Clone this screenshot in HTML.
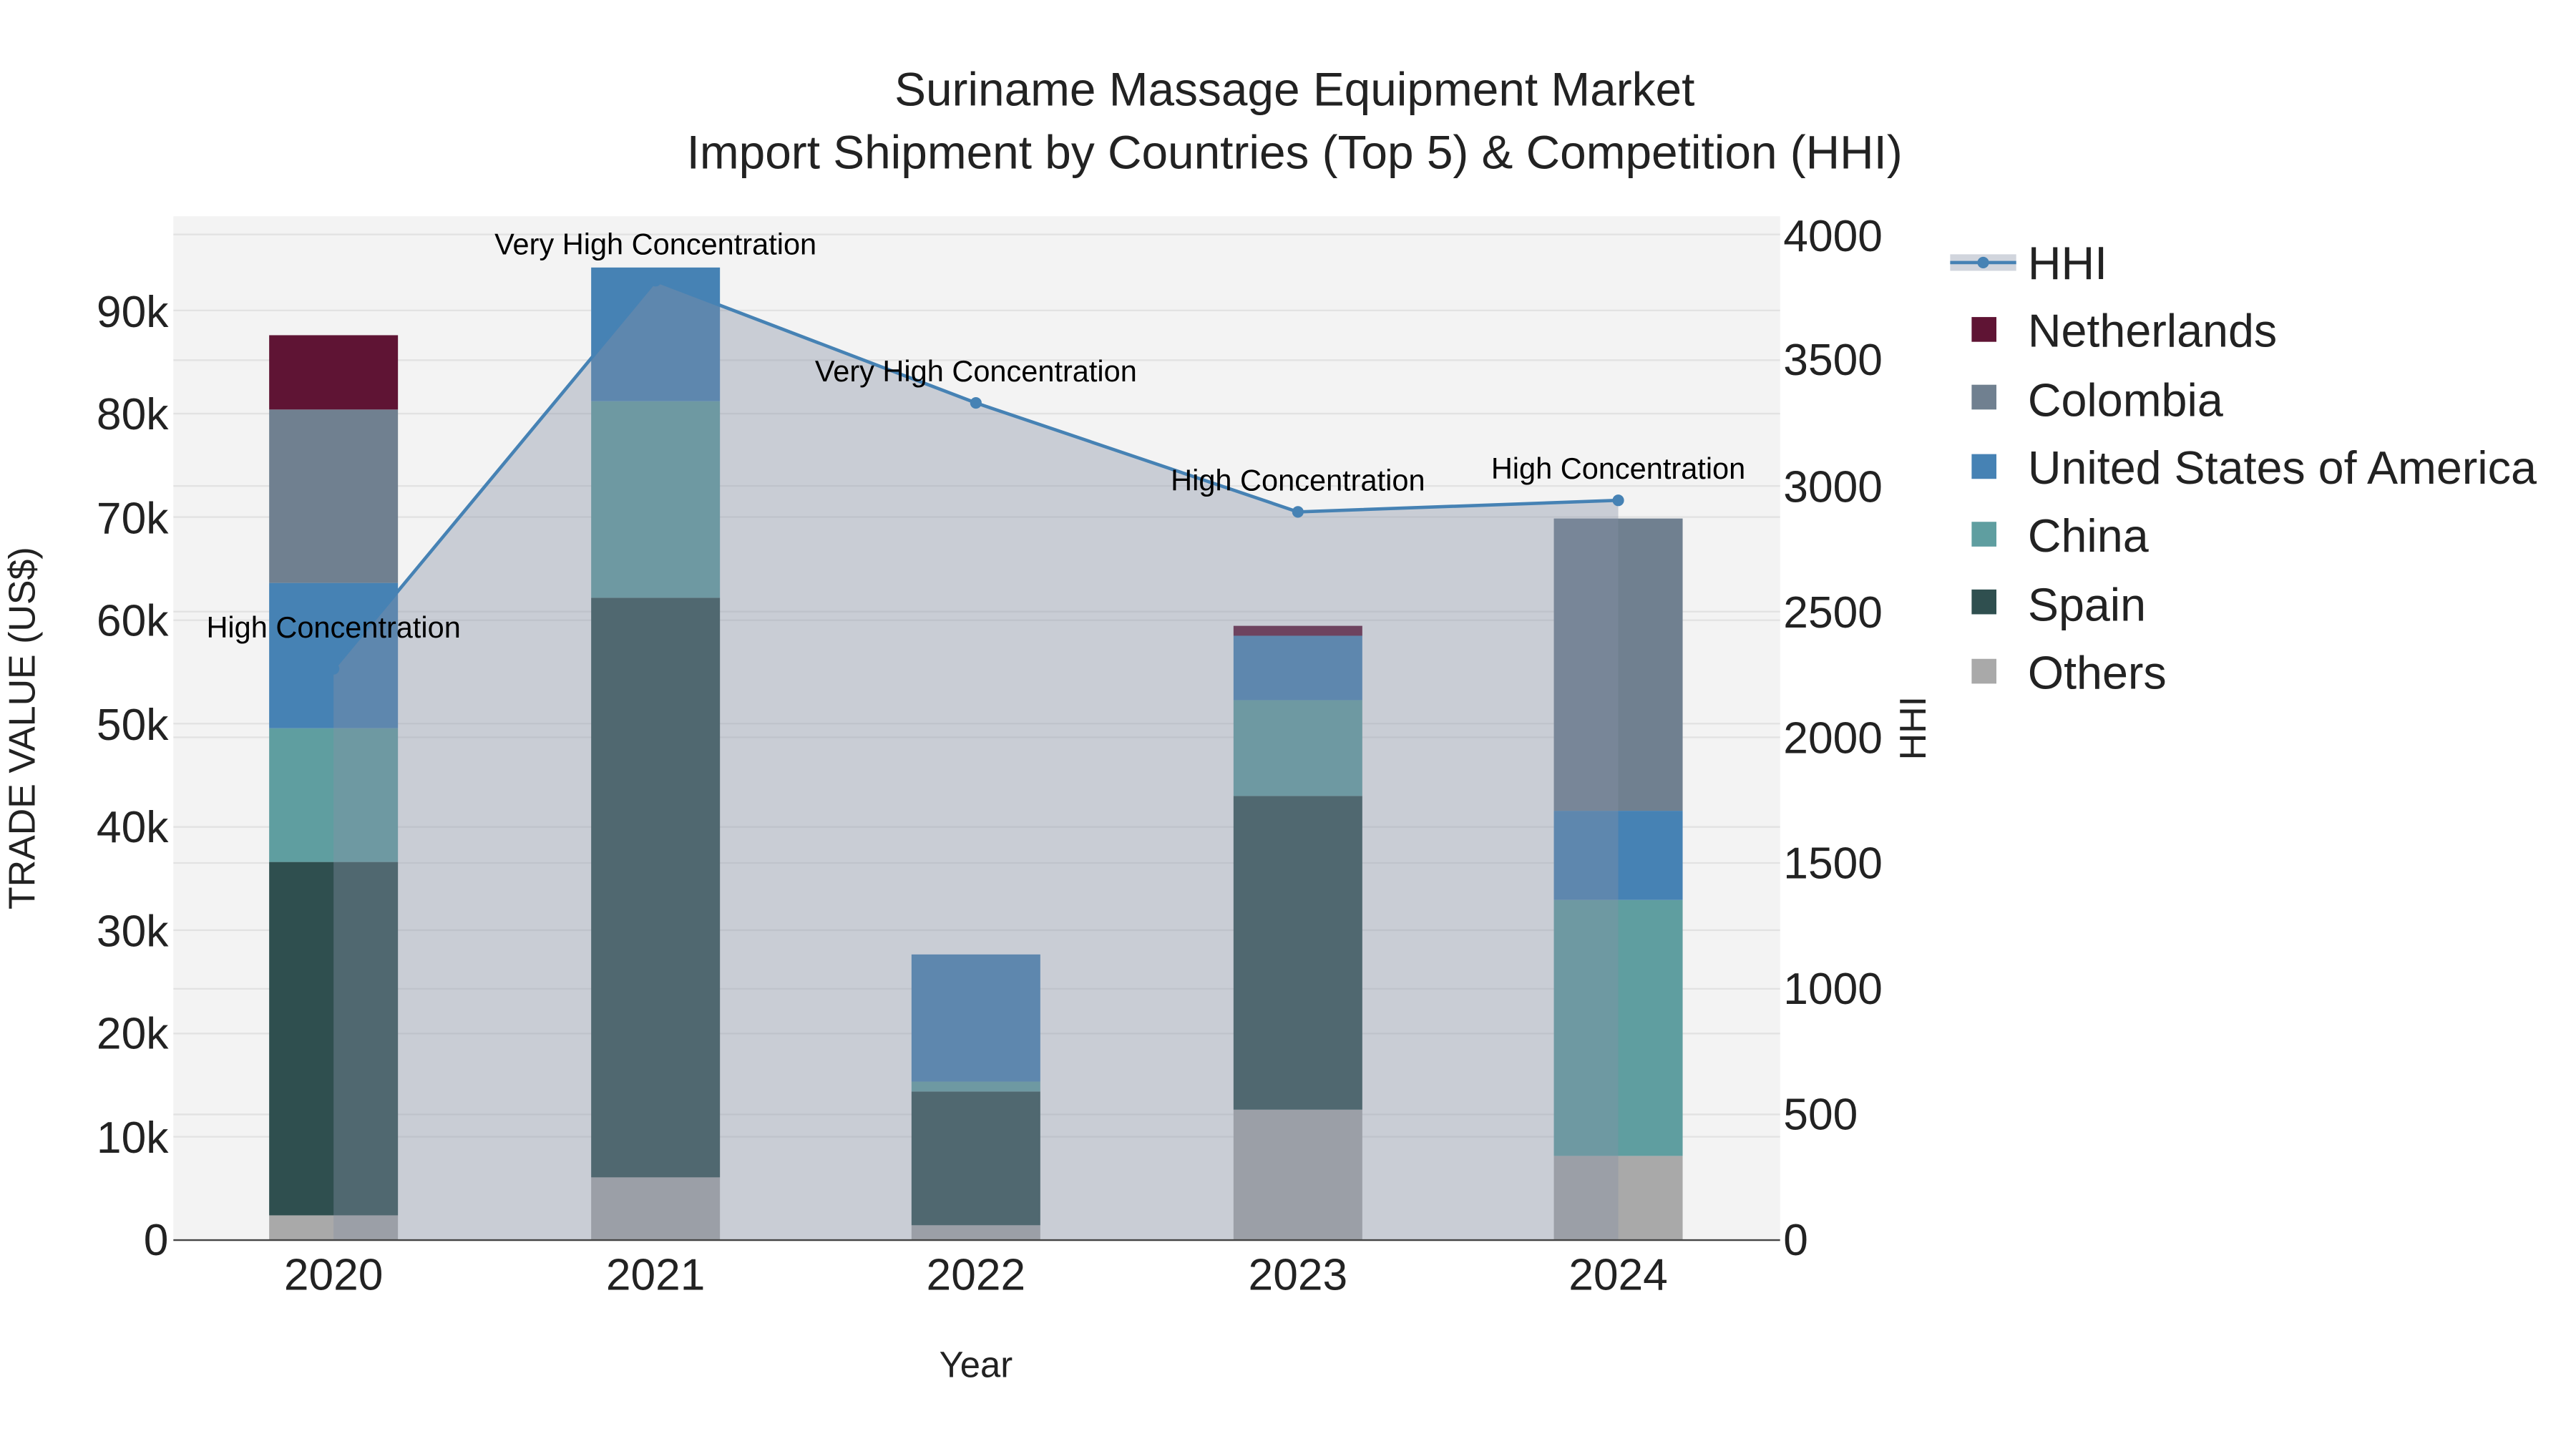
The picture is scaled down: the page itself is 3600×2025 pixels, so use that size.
<!DOCTYPE html>
<html><head><meta charset="utf-8"><style>html,body{margin:0;padding:0;background:#fff}svg{display:block}</style></head>
<body>
<svg width="3600" height="2025" viewBox="0 0 1560 877.5" xmlns="http://www.w3.org/2000/svg" font-family="Liberation Sans, sans-serif">
<rect width="1560" height="877.5" fill="#fff"/>
<rect x="105" y="131" width="973" height="620" fill="#f3f3f3"/>
<g stroke="#e2e2e2" stroke-width="1">
<line x1="105" x2="1078" y1="688.4" y2="688.4"/><line x1="105" x2="1078" y1="625.9" y2="625.9"/>
<line x1="105" x2="1078" y1="563.3" y2="563.3"/><line x1="105" x2="1078" y1="500.8" y2="500.8"/>
<line x1="105" x2="1078" y1="438.2" y2="438.2"/><line x1="105" x2="1078" y1="375.6" y2="375.6"/>
<line x1="105" x2="1078" y1="313.1" y2="313.1"/><line x1="105" x2="1078" y1="250.5" y2="250.5"/>
<line x1="105" x2="1078" y1="188" y2="188"/>
<line x1="105" x2="1078" y1="674.9" y2="674.9"/><line x1="105" x2="1078" y1="598.8" y2="598.8"/>
<line x1="105" x2="1078" y1="522.6" y2="522.6"/><line x1="105" x2="1078" y1="446.5" y2="446.5"/>
<line x1="105" x2="1078" y1="370.4" y2="370.4"/><line x1="105" x2="1078" y1="294.3" y2="294.3"/>
<line x1="105" x2="1078" y1="218.1" y2="218.1"/><line x1="105" x2="1078" y1="142" y2="142"/>
</g>
<g>
<rect x="163" y="736" width="78" height="15" fill="#a9a9a9"/>
<rect x="163" y="522" width="78" height="214" fill="#2f4f4f"/>
<rect x="163" y="441" width="78" height="81" fill="#5f9ea0"/>
<rect x="163" y="353" width="78" height="88" fill="#4682b4"/>
<rect x="163" y="248" width="78" height="105" fill="#708090"/>
<rect x="163" y="203" width="78" height="45" fill="#5f1434"/>

<rect x="358" y="713" width="78" height="38" fill="#a9a9a9"/>
<rect x="358" y="362" width="78" height="351" fill="#2f4f4f"/>
<rect x="358" y="243" width="78" height="119" fill="#5f9ea0"/>
<rect x="358" y="162" width="78" height="81" fill="#4682b4"/>

<rect x="552" y="742" width="78" height="9" fill="#a9a9a9"/>
<rect x="552" y="661" width="78" height="81" fill="#2f4f4f"/>
<rect x="552" y="655" width="78" height="6" fill="#5f9ea0"/>
<rect x="552" y="578" width="78" height="77" fill="#4682b4"/>

<rect x="747" y="672" width="78" height="79" fill="#a9a9a9"/>
<rect x="747" y="482" width="78" height="190" fill="#2f4f4f"/>
<rect x="747" y="424" width="78" height="58" fill="#5f9ea0"/>
<rect x="747" y="385" width="78" height="39" fill="#4682b4"/>
<rect x="747" y="379" width="78" height="6" fill="#5f1434"/>

<rect x="941" y="700" width="78" height="51" fill="#a9a9a9"/>
<rect x="941" y="545" width="78" height="155" fill="#5f9ea0"/>
<rect x="941" y="491" width="78" height="54" fill="#4682b4"/>
<rect x="941" y="314" width="78" height="177" fill="#708090"/>
</g>
<polygon points="202,405 397,170 591,244 786,310 980,303 980,751 202,751" fill="rgba(135,145,165,0.38)"/>
<polyline points="202,405 397,170 591,244 786,310 980,303" fill="none" stroke="#4682b4" stroke-width="2"/>
<g fill="#4682b4"><circle cx="202" cy="405" r="3.5"/><circle cx="397" cy="170" r="3.5"/><circle cx="591" cy="244" r="3.5"/><circle cx="786" cy="310" r="3.5"/><circle cx="980" cy="303" r="3.5"/></g>
<line x1="105" x2="1078" y1="751" y2="751" stroke="#444" stroke-width="1"/>
<g font-size="18" fill="#000" text-anchor="middle">
<text x="202" y="386">High Concentration</text>
<text x="397" y="154">Very High Concentration</text>
<text x="591" y="231">Very High Concentration</text>
<text x="786" y="297">High Concentration</text>
<text x="980" y="290">High Concentration</text>
</g>
<g font-size="27" fill="#222" text-anchor="end">
<text x="102" y="760">0</text><text x="102" y="698">10k</text><text x="102" y="635">20k</text>
<text x="102" y="573">30k</text><text x="102" y="510">40k</text><text x="102" y="448">50k</text>
<text x="102" y="385">60k</text><text x="102" y="323">70k</text><text x="102" y="260">80k</text>
<text x="102" y="198">90k</text>
</g>
<g font-size="27" fill="#222" text-anchor="start">
<text x="1080" y="760">0</text><text x="1080" y="684">500</text><text x="1080" y="608">1000</text>
<text x="1080" y="532">1500</text><text x="1080" y="456">2000</text><text x="1080" y="380">2500</text>
<text x="1080" y="304">3000</text><text x="1080" y="227">3500</text><text x="1080" y="152">4000</text>
</g>
<g font-size="27" fill="#222" text-anchor="middle">
<text x="202" y="781">2020</text><text x="397" y="781">2021</text><text x="591" y="781">2022</text>
<text x="786" y="781">2023</text><text x="980" y="781">2024</text>
</g>
<text x="591" y="834" font-size="22" fill="#222" text-anchor="middle">Year</text>
<text transform="translate(21,441) rotate(-90)" font-size="22.5" fill="#222" text-anchor="middle">TRADE VALUE (US$)</text>
<text transform="translate(1166,441) rotate(-90)" font-size="22.5" fill="#222" text-anchor="middle">HHI</text>
<g font-size="28.5" fill="#222" text-anchor="middle">
<text x="784" y="64">Suriname Massage Equipment Market</text>
<text x="784" y="102">Import Shipment by Countries (Top 5) &amp; Competition (HHI)</text>
</g>
<rect x="1181" y="154" width="40" height="10" fill="rgba(135,145,165,0.38)"/>
<line x1="1181" x2="1221" y1="159" y2="159" stroke="#4682b4" stroke-width="2"/>
<circle cx="1201" cy="159" r="3.5" fill="#4682b4"/>
<g>
<rect x="1194" y="192" width="15" height="15" fill="#5f1434"/>
<rect x="1194" y="233" width="15" height="15" fill="#708090"/>
<rect x="1194" y="275" width="15" height="15" fill="#4682b4"/>
<rect x="1194" y="316" width="15" height="15" fill="#5f9ea0"/>
<rect x="1194" y="357" width="15" height="15" fill="#2f4f4f"/>
<rect x="1194" y="399" width="15" height="15" fill="#a9a9a9"/>
</g>
<g font-size="28" fill="#222">
<text x="1228" y="169">HHI</text>
<text x="1228" y="210">Netherlands</text>
<text x="1228" y="252">Colombia</text>
<text x="1228" y="293">United States of America</text>
<text x="1228" y="334">China</text>
<text x="1228" y="376">Spain</text>
<text x="1228" y="417">Others</text>
</g>
</svg>
</body></html>
